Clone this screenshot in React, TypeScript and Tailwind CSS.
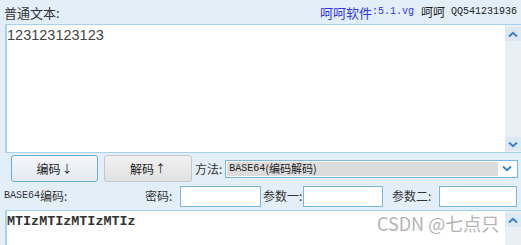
import React from "react";

const Up = () => (
  <svg width="10" height="7" viewBox="0 0 10 7">
    <path d="M1 5.5 L5 1.8 L9 5.5" fill="none" stroke="#3a7fd0" strokeWidth="2" />
  </svg>
);
const Down = () => (
  <svg width="10" height="7" viewBox="0 0 10 7">
    <path d="M1 1.5 L5 5.2 L9 1.5" fill="none" stroke="#3a7fd0" strokeWidth="2" />
  </svg>
);

export default function App() {
  const cjk = { fontFamily: '"Noto Sans CJK SC", "Liberation Sans", sans-serif' };
  return (
    <div
      className="w-[521px] h-[245px] bg-[#e3eff8] overflow-hidden flex flex-col text-[#333] text-[12px] leading-none"
      style={cjk}
    >
      {/* header */}
      <div className="h-[24px] flex items-center pl-[4px]">
        <span className="text-[13px]">普通文本:</span>
        <div className="ml-auto w-[201px] flex items-center">
          <span className="w-[52px] text-[#3333ee] text-[13px] whitespace-nowrap">呵呵软件</span>
          <span className="w-[38px] text-[#3333ee] text-[10px] font-['Liberation_Mono',monospace] whitespace-nowrap">:5.1.vg</span>
          <span className="ml-[11px] w-[24px] text-[12px] text-[#222] whitespace-nowrap">呵呵</span>
          <span className="ml-[6px] text-[10px] text-[#222] font-['Liberation_Mono',monospace] whitespace-nowrap">QQ541231936</span>
        </div>
      </div>

      {/* top text area */}
      <div className="ml-[5px] h-[129px] shrink-0 flex bg-white border-l-2 border-t border-b border-[#a6d2ef]">
        <div className="flex-1 pt-[3px] text-[14.5px] text-[#444] font-['Liberation_Sans',sans-serif]">
          123123123123
        </div>
        <div className="w-[16px] bg-[#e8f0f5] flex flex-col justify-between">
          <div className="h-[14px] mt-[2px] bg-[#dce9f2] flex items-center justify-center"><Up /></div>
          <div className="h-[14px] mb-[1px] bg-[#dce9f2] flex items-center justify-center"><Down /></div>
        </div>
      </div>

      {/* button row */}
      <div className="h-[31px] shrink-0 flex items-center pl-[11px]">
        <button className="w-[87px] h-[27px] rounded-[3px] border border-[#6aaedc] bg-gradient-to-b from-[#f4f7fa] to-[#e4eaef] text-[12px] text-[#222] flex items-center justify-center">
          编码<span className="ml-[1px] text-[11px]">↓</span>
        </button>
        <button className="ml-[6px] w-[88px] h-[27px] rounded-[3px] border border-[#c4c8cc] bg-gradient-to-b from-[#f0f0f0] to-[#e2e2e2] text-[12px] text-[#222] flex items-center justify-center">
          解码<span className="ml-[1px] text-[11px]">↑</span>
        </button>
        <span className="ml-[3px] text-[12px]">方法:</span>
        <div className="ml-[3px] w-[293px] h-[18px] border border-[#7ab6e2] bg-white flex items-center p-[1px]">
          <div className="flex-1 h-full bg-[#dcdcdc] flex items-center pl-[2px] text-[11px] text-[#222]">
            <span className="font-['Liberation_Mono',monospace] text-[10px]">BASE64</span>
            <span>(编码解码)</span>
          </div>
          <div className="w-[18px] flex items-center justify-center"><Down /></div>
        </div>
      </div>

      {/* params row */}
      <div className="h-[24px] shrink-0 flex items-center pl-[4px]">
        <div className="w-[141px] flex items-center">
          <span className="font-['Liberation_Mono',monospace] text-[10px]">BASE64</span>
          <span className="text-[12px]">编码:</span>
        </div>
        <span className="w-[35px] text-[12px]">密码:</span>
        <div className="w-[81px] h-[21px] border border-[#7ab6e2] bg-white" />
        <span className="ml-[2px] w-[40px] text-[12px]">参数一:</span>
        <div className="w-[80px] h-[21px] border border-[#7ab6e2] bg-white" />
        <span className="ml-[9px] w-[47px] text-[12px]">参数二:</span>
        <div className="w-[78px] h-[21px] border border-[#7ab6e2] bg-white" />
      </div>

      {/* bottom text area */}
      <div className="mt-[2px] ml-[5px] flex-1 flex bg-white border-l-2 border-t border-[#a6d2ef] relative">
        <div className="flex-1 pt-[4px] text-[13.4px] font-semibold text-[#333] font-['Liberation_Mono',monospace]">
          MTIzMTIzMTIzMTIz
        </div>
        <div className="w-[16px] bg-[#e8f0f5] flex flex-col">
          <div className="h-[14px] mt-[2px] bg-[#dce9f2] flex items-center justify-center"><Up /></div>
        </div>
        <span className="absolute left-[370px] top-[3px] text-[18px] text-[#b4b4b4]">CSDN @七点只</span>
      </div>
    </div>
  );
}
